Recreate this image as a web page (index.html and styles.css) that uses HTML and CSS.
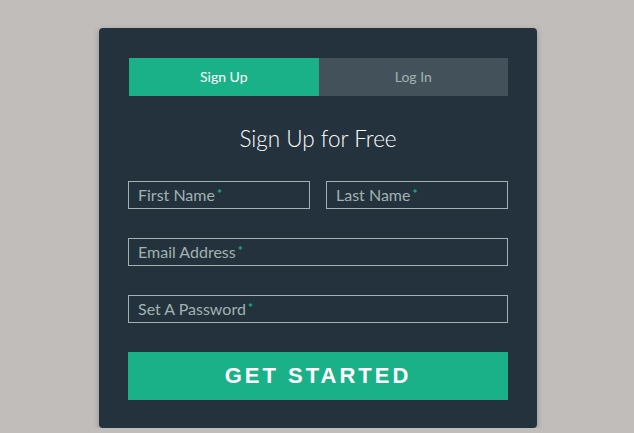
FILE: index.html
```html
<!DOCTYPE html>
<html lang="en">
<head>
    <meta charset="UTF-8">
    <meta name="viewport" content="width=device-width, initial-scale=1.0">
    <title>Sign Up</title>
    <link rel="stylesheet" href="styles.css">
</head>
<body>
    <div class="form">
        <ul class="tab-group">
            <li class="tab active"><a href="#signup">Sign Up</a></li>
            <li class="tab"><a href="#login">Log In</a></li>
        </ul>

        <form id="signup">
            <h1>Sign Up for Free</h1>

            <div class="top-row">
                <div class="field-wrap">
                    <label for="first">First Name<span class="req">*</span></label>
                    <input type="text" id="first" required>
                </div>
                <div class="field-wrap">
                    <label for="last">Last Name<span class="req">*</span></label>
                    <input type="text" id="last" required>
                </div>
            </div>

            <div class="field-wrap">
                <label for="email">Email Address<span class="req">*</span></label>
                <input type="email" id="email" required>
            </div>

            <div class="field-wrap">
                <label for="password">Set A Password<span class="req">*</span></label>
                <input type="password" id="password" required>
            </div>

            <button type="submit" class="button">Get Started</button>
        </form>
    </div>
</body>
</html>
```

FILE: styles.css
```css
* {
    box-sizing: border-box;
}
body {
    margin: 0;
    padding-top: 28px;
    display: flex;
    justify-content: center;
    background: #c1bdba;
    font-family: 'Lato', sans-serif;
}
.form {
    width: 438px;
    margin-left: 2px;
    padding: 30px 29px 28px;
    background: #24323d;
    border-radius: 4px;
    box-shadow: 0 2px 6px rgba(0, 0, 0, 0.25);
}
.tab-group {
    list-style: none;
    margin: 0;
    padding: 0 0 0 1px;
    display: flex;
}
.tab {
    flex: 1;
}
.tab a {
    display: block;
    height: 38px;
    line-height: 38px;
    text-align: center;
    text-decoration: none;
    font-size: 14px;
    background: #43525a;
    color: #a0b3b0;
}
.tab.active a {
    background: #1ab188;
    color: #ffffff;
}
h1 {
    margin: 28px 0 27px;
    text-align: center;
    font-size: 22.5px;
    line-height: 30px;
    font-weight: 300;
    color: #ffffff;
}
.top-row {
    display: flex;
    gap: 16px;
}
.top-row .field-wrap {
    flex: 1;
}
.field-wrap {
    position: relative;
    margin-bottom: 29px;
}
.field-wrap label {
    position: absolute;
    left: 10px;
    top: 3px;
    font-size: 16px;
    line-height: 19px;
    color: #a0b3b0;
    pointer-events: none;
}
.req {
    color: #1ab188;
    font-size: 12px;
    font-weight: 700;
    margin-left: 2px;
    vertical-align: 3px;
}
input {
    display: block;
    width: 100%;
    height: 28px;
    padding: 0 10px;
    background: none;
    border: 1px solid #a0b3b0;
    border-radius: 0;
    color: #ffffff;
    font-family: inherit;
    font-size: 16px;
}
.button {
    display: block;
    width: 100%;
    height: 48px;
    border: 0;
    background: #1ab188;
    color: #ffffff;
    font-family: 'Liberation Sans', Arial, sans-serif;
    font-size: 22px;
    font-weight: 700;
    letter-spacing: 3px;
    text-transform: uppercase;
    cursor: pointer;
}
```
